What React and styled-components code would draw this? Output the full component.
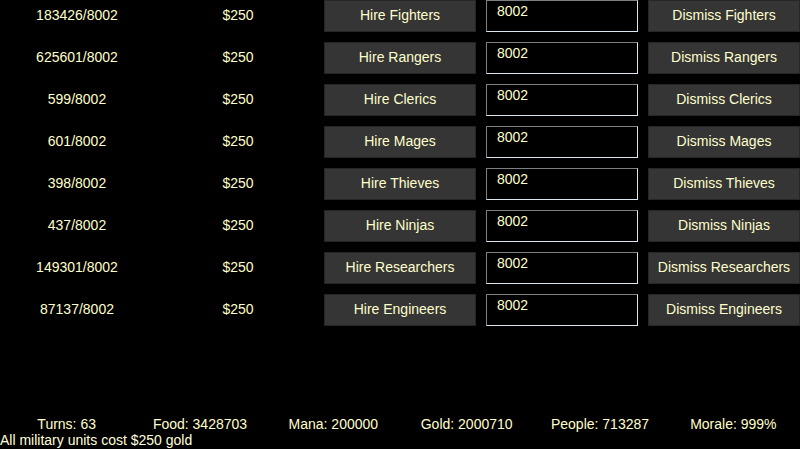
import React from 'react';
import styled, { createGlobalStyle } from 'styled-components';

const GlobalStyle = createGlobalStyle`
  html, body {
    margin: 0;
    padding: 0;
    background: #000;
  }
  body {
    font-family: 'Liberation Sans', Arial, sans-serif;
    font-size: 14px;
    color: #ffffcc;
  }
`;

const Page = styled.div`
  width: 800px;
  height: 449px;
  display: flex;
  flex-direction: column;
  overflow: hidden;
`;

const UnitList = styled.div`
  display: flex;
  flex-direction: column;
  gap: 10px;
`;

const UnitRow = styled.div`
  display: flex;
  align-items: flex-start;
  height: 32px;
`;

const Cell = styled.div`
  flex: none;
  width: ${p => p.w}px;
  text-align: center;
  line-height: 30px;
`;

const ActionButton = styled.button`
  flex: none;
  width: 152px;
  height: 32px;
  margin: 0 0 0 ${p => p.gap || 0}px;
  box-sizing: border-box;
  background: #353535;
  border: 1px solid #262626;
  color: #ffffcc;
  font-family: 'Liberation Sans', Arial, sans-serif;
  font-size: 14px;
  padding: 0 0 2px;
  cursor: pointer;
`;

const CountInput = styled.input`
  flex: none;
  width: 152px;
  height: 32px;
  margin: 0 0 0 10px;
  box-sizing: border-box;
  background: #000;
  color: #ffffcc;
  font-family: 'Liberation Sans', Arial, sans-serif;
  font-size: 14px;
  padding: 0 10px 10px;
  border-style: solid;
  border-width: 1px;
  border-color: #7f7f7f #dce6f0 #dce6f0 #7f7f7f;
  outline: none;
`;

const Footer = styled.div`
  margin-top: auto;
  padding-bottom: 1px;
  line-height: 16px;
`;

const Stats = styled.div`
  display: grid;
  grid-template-columns: repeat(6, 1fr);
  text-align: center;
`;

const Note = styled.div`
  color: #ffffdd;
`;

const units = [
  ['Fighters', '183426'],
  ['Rangers', '625601'],
  ['Clerics', '599'],
  ['Mages', '601'],
  ['Thieves', '398'],
  ['Ninjas', '437'],
  ['Researchers', '149301'],
  ['Engineers', '87137'],
];

const stats = [
  'Turns: 63',
  'Food: 3428703',
  'Mana: 200000',
  'Gold: 2000710',
  'People: 713287',
  'Morale: 999%',
];

export default function App() {
  return (
    <Page>
      <GlobalStyle />
      <UnitList>
        {units.map(([name, have]) => (
          <UnitRow key={name}>
            <Cell w={154}>{have}/8002</Cell>
            <Cell w={168}>$250</Cell>
            <ActionButton gap={2}>Hire {name}</ActionButton>
            <CountInput defaultValue="8002" />
            <ActionButton gap={10}>Dismiss {name}</ActionButton>
          </UnitRow>
        ))}
      </UnitList>
      <Footer>
        <Stats>
          {stats.map(s => <div key={s}>{s}</div>)}
        </Stats>
        <Note>All military units cost $250 gold</Note>
      </Footer>
    </Page>
  );
}
